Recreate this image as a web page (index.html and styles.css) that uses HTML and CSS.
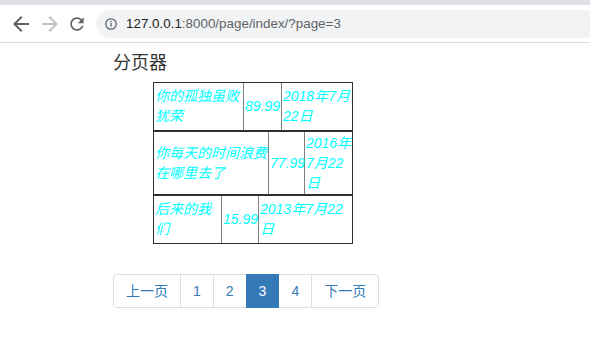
FILE: index.html
```html
<!DOCTYPE html>
<html lang="zh-CN">
<head>
<meta charset="utf-8">
<title>分页器</title>
<link rel="stylesheet" href="styles.css">
</head>
<body>
<div class="tabstrip"></div>
<div class="toolbar">
  <span class="tb-btn">
    <svg width="24" height="24" viewBox="0 0 24 24"><path fill="#5f6368" d="M20 11H7.83l5.59-5.59L12 4l-8 8 8 8 1.41-1.41L7.83 13H20v-2z"/></svg>
  </span>
  <span class="tb-btn">
    <svg width="24" height="24" viewBox="0 0 24 24"><path fill="#bdc1c6" d="M12 4l-1.41 1.41L16.17 11H4v2h12.17l-5.58 5.59L12 20l8-8z"/></svg>
  </span>
  <span class="tb-btn reload">
    <svg width="20" height="20" viewBox="0 0 24 24"><path fill="#5f6368" d="M17.65 6.35C16.2 4.9 14.21 4 12 4c-4.42 0-7.99 3.58-7.99 8s3.57 8 7.99 8c3.730 0 6.84-2.55 7.73-6h-2.08c-.82 2.33-3.04 4-5.65 4-3.31 0-6-2.69-6-6s2.69-6 6-6c1.66 0 3.14.69 4.22 1.78L13 11h7V4l-2.35 2.35z"/></svg>
  </span>
  <div class="omnibox">
    <svg class="info" width="12" height="12" viewBox="0 0 12 12"><circle cx="6" cy="6" r="5.2" fill="none" stroke="#5f6368" stroke-width="1.3"/><rect x="5.35" y="5" width="1.3" height="3.6" fill="#5f6368"/><rect x="5.35" y="3" width="1.3" height="1.3" fill="#5f6368"/></svg>
    <span class="url"><span class="host">127.0.0.1</span><span class="path">:8000/page/index/?page=3</span></span>
  </div>
</div>
<main class="page">
  <h4 class="title">分页器</h4>
  <div class="book-list">
    <table class="book t1"><tr><td class="c1">你的孤独虽败犹荣</td><td class="c2">89.99</td><td class="c3">2018年7月22日</td></tr></table>
    <table class="book t2"><tr><td class="c1">你每天的时间浪费在哪里去了</td><td class="c2">77.99</td><td class="c3">2016年7月22日</td></tr></table>
    <table class="book t3"><tr><td class="c1">后来的我们</td><td class="c2">15.99</td><td class="c3">2013年7月22日</td></tr></table>
  </div>
  <ul class="pagination">
    <li><a href="#">上一页</a></li>
    <li><a href="#">1</a></li>
    <li><a href="#">2</a></li>
    <li class="active"><a href="#">3</a></li>
    <li><a href="#">4</a></li>
    <li><a href="#">下一页</a></li>
  </ul>
</main>
</body>
</html>
```
FILE: styles.css
```css
html, body {
  margin: 0;
  padding: 0;
  background: #fff;
}
body {
  font-family: "Liberation Sans", "Noto Sans CJK SC", sans-serif;
  font-size: 14px;
  line-height: 20px;
  color: #333;
}
.tabstrip {
  height: 5px;
  background: #dee1e6;
}
.toolbar {
  height: 37px;
  border-bottom: 1px solid #dadce0;
  display: flex;
  align-items: center;
  padding-left: 9px;
  gap: 5px;
  overflow: hidden;
}
.tb-btn {
  display: flex;
  align-items: center;
  justify-content: center;
  width: 24px;
  height: 24px;
}
.tb-btn.reload {
  width: 20px;
}
.omnibox {
  flex: 1;
  margin-left: 4px;
  margin-right: -30px;
  height: 28px;
  border-radius: 14px;
  background: #f1f3f4;
  display: flex;
  align-items: center;
  padding-left: 9px;
}
.info {
  flex: none;
}
.url {
  margin-left: 9px;
  font-family: "Liberation Sans", sans-serif;
  font-size: 13.4px;
  line-height: 16px;
}
.host { color: #202124; }
.path { color: #5f6368; }

.page {
  padding-left: 113px;
}
.title {
  margin: 11px 0 8px;
  font-size: 18px;
  font-weight: 400;
  line-height: 1.1;
  color: #333;
}
.book-list {
  padding-left: 40px;
}
.book {
  width: 200px;
  table-layout: fixed;
  border-collapse: separate;
  border-spacing: 0;
  border: 1px solid #2f2f2f;
  color: #00ffff;
  font-style: italic;
}
.book td {
  padding: 1px;
  vertical-align: middle;
  overflow: visible;
  white-space: normal;
}
.book td + td {
  border-left: 1px solid #808080;
}
.t1 { height: 49px; }
.t2 { height: 63px; }
.t3 { height: 49px; }
.t1 .c1 { width: 87px; }
.t1 .c2 { width: 35px; }
.t1 .c3 { width: 68px; }
.t2 .c1 { width: 112px; }
.t2 .c2 { width: 33px; }
.t2 .c3 { width: 45px; letter-spacing: -0.06px; }
.t3 .c1 { width: 65px; }
.t3 .c2 { width: 34px; }
.t3 .c3 { width: 91px; }

.pagination {
  display: flex;
  list-style: none;
  margin: 30px 0 20px;
  padding: 0;
}
.pagination li + li {
  margin-left: -1px;
}
.pagination a {
  display: block;
  padding: 6px 12px;
  line-height: 20px;
  color: #337ab7;
  text-decoration: none;
  background: #fff;
  border: 1px solid #ddd;
}
.pagination li:first-child a {
  border-radius: 4px 0 0 4px;
}
.pagination li:last-child a {
  border-radius: 0 4px 4px 0;
}
.pagination .active a {
  position: relative;
  z-index: 2;
  color: #fff;
  background: #337ab7;
  border-color: #337ab7;
}
```
